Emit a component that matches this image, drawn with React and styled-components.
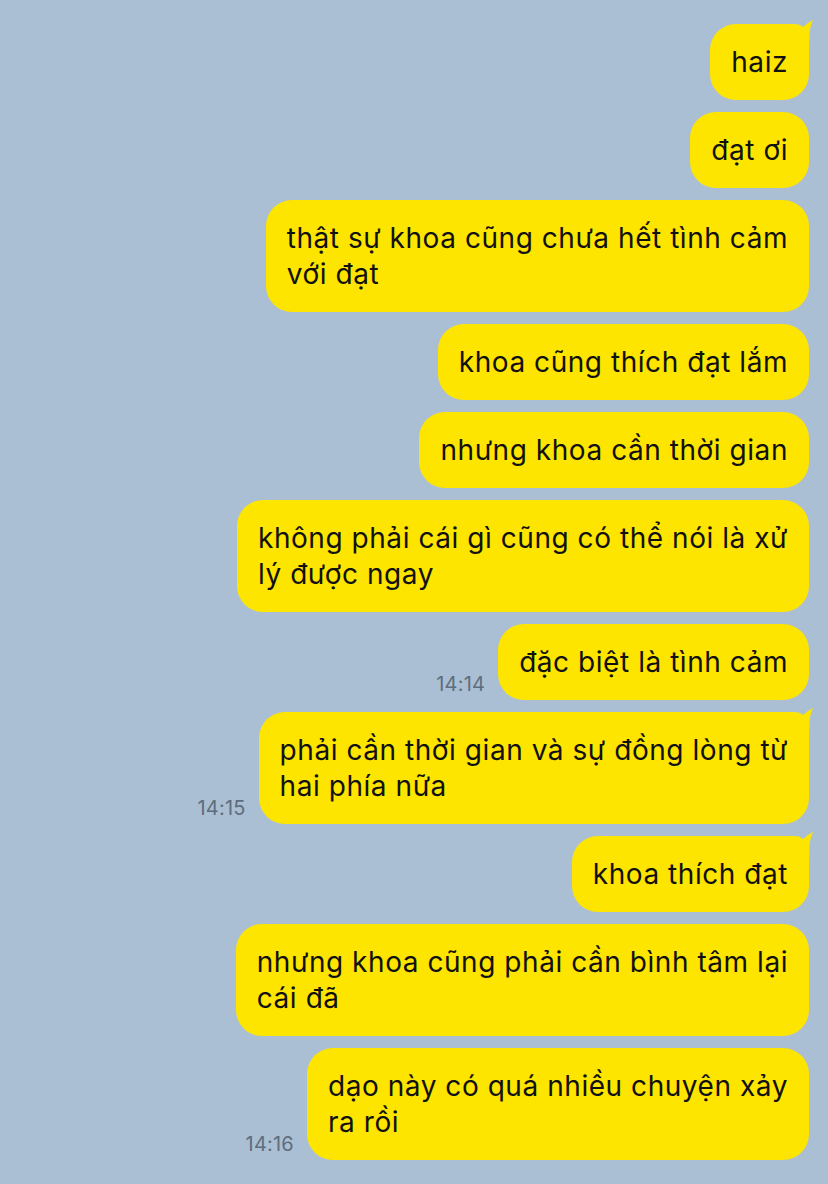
import React from 'react';
import styled, { createGlobalStyle } from 'styled-components';

const GlobalStyle = createGlobalStyle`
  html, body {
    margin: 0;
    padding: 0;
    background: #aabfd3;
  }
  body {
    font-family: Inter, "Noto Sans", sans-serif;
    -webkit-font-smoothing: antialiased;
  }
`;

const Chat = styled.div`
  display: flex;
  flex-direction: column;
  gap: 12px;
  padding: 24px 19px 24px 19px;
  min-height: 1184px;
  box-sizing: border-box;
  background: #aabfd3;
`;

const Row = styled.div`
  display: flex;
  justify-content: flex-end;
  align-items: flex-end;
  gap: 13px;
`;

const Time = styled.span`
  font-size: 20px;
  line-height: 22px;
  color: #5f6d7c;
  margin-bottom: 5px;
  letter-spacing: 0.2px;
`;

const Bubble = styled.div`
  position: relative;
  background: #fee500;
  color: #111;
  font-size: 28px;
  line-height: 36px;
  letter-spacing: 0.55px;
  padding: 20px 21px;
  border-radius: 26px;
  white-space: nowrap;
`;

const Tail = styled.svg`
  position: absolute;
  top: -5px;
  right: -5px;
  width: 34px;
  height: 30px;
`;

const messages = [
  { lines: ['haiz'], tail: true },
  { lines: ['đạt ơi'] },
  { lines: ['thật sự khoa cũng chưa hết tình cảm', 'với đạt'] },
  { lines: ['khoa cũng thích đạt lắm'] },
  { lines: ['nhưng khoa cần thời gian'] },
  { lines: ['không phải cái gì cũng có thể nói là xử', 'lý được ngay'] },
  { lines: ['đặc biệt là tình cảm'], time: '14:14' },
  { lines: ['phải cần thời gian và sự đồng lòng từ', 'hai phía nữa'], time: '14:15', tail: true },
  { lines: ['khoa thích đạt'], tail: true },
  { lines: ['nhưng khoa cũng phải cần bình tâm lại', 'cái đã'] },
  { lines: ['dạo này có quá nhiều chuyện xảy', 'ra rồi'], time: '14:16' },
];

const App = () => (
  <>
    <GlobalStyle />
    <Chat>
      {messages.map((msg, i) => (
        <Row key={i}>
          {msg.time && <Time>{msg.time}</Time>}
          <Bubble>
            {msg.tail && (
              <Tail viewBox="0 0 34 30">
                <path
                  d="M0 5 L14 5 Q20 5 23 8 Q27 4 33 1 Q30 7 29.5 14 L29 30 L0 30 Z"
                  fill="#fee500"
                />
              </Tail>
            )}
            {msg.lines.map((line, j) => (
              <div key={j}>{line}</div>
            ))}
          </Bubble>
        </Row>
      ))}
    </Chat>
  </>
);

export default App;
